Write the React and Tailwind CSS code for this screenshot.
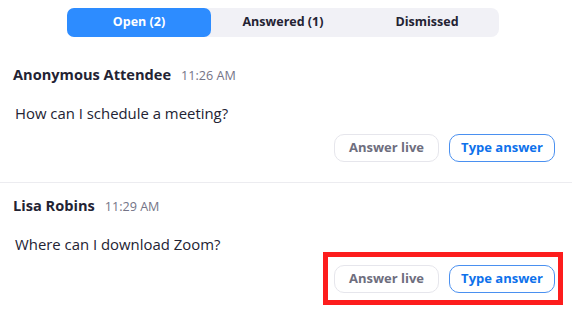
import React from "react";

const questions = [
  { id: 1, name: "Anonymous Attendee", time: "11:26 AM", text: "How can I schedule a meeting?" },
  { id: 2, name: "Lisa Robins", time: "11:29 AM", text: "Where can I download Zoom?", highlight: true },
];

function Tabs() {
  return (
    <div className="pt-2 pl-[67px]">
      <div className="flex w-[432px] h-[29px] rounded-[8px] bg-[#f1f1f6] text-[12.5px] font-bold">
        <div className="w-[144px] flex items-center justify-center rounded-[7px] bg-[#2d8cff] text-white">
          Open (2)
        </div>
        <div className="w-[144px] flex items-center justify-center text-[#232333]">Answered (1)</div>
        <div className="w-[144px] flex items-center justify-center text-[#232333]">Dismissed</div>
      </div>
    </div>
  );
}

function QuestionItem({ q, first }) {
  return (
    <div className={first ? "pt-[27px]" : "pt-[12px]"}>
      <div className="flex items-baseline pl-[13px] leading-[20px]">
        <span className="text-[14.6px] font-bold text-[#232333]">{q.name}</span>
        <span className="ml-[10px] text-[12.6px] text-[#747487]">{q.time}</span>
      </div>
      <div className="mt-[17px] pl-[15px] text-[14.9px] leading-[20px] text-[#232333]">{q.text}</div>
      <div className="mt-[11px] flex justify-end pr-[22px]">
        <div className="relative flex gap-[10px]">
          {q.highlight && (
            <div className="absolute -left-[11px] -top-[13px] -right-[8px] -bottom-[12px] border-[5px] border-[#fd1d1d]" />
          )}
          <button className="w-[105px] h-[28px] rounded-[10px] border border-[#e6e6ec] bg-white text-[13px] font-bold text-[#6e6e7e]">
            Answer live
          </button>
          <button className="w-[106px] h-[28px] rounded-[10px] border border-[#4a90f0] bg-white text-[13px] font-bold text-[#0e71eb]">
            Type answer
          </button>
        </div>
      </div>
      {first && <div className="mt-[20px] mr-[5px] h-px bg-[#ececf0]" />}
    </div>
  );
}

export default function App() {
  return (
    <div className="w-[577px] h-[311px] overflow-hidden bg-white font-['Open_Sans',sans-serif]">
      <Tabs />
      {questions.map((q, i) => (
        <QuestionItem key={q.id} q={q} first={i === 0} />
      ))}
    </div>
  );
}
